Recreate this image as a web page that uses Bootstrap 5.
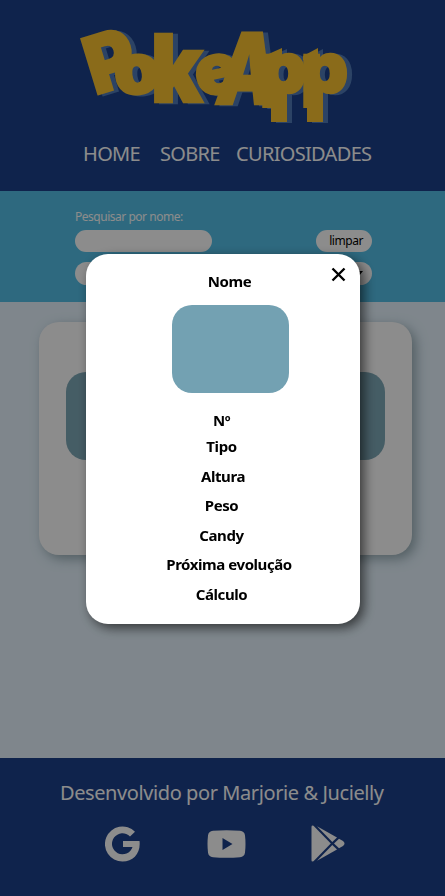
<!DOCTYPE html>
<html lang="pt-br">
<head>
<meta charset="utf-8">
<meta name="viewport" content="width=device-width, initial-scale=1">
<title>PokeApp</title>
<link href="https://cdn.jsdelivr.net/npm/bootstrap@5.3.0/dist/css/bootstrap.min.css" rel="stylesheet">
<style>
body{font-family:"Noto Sans","Open Sans",sans-serif;background:#e7f5ff;height:896px;overflow:hidden}
.top-bar{background:#1d418a;height:191px}
.logo{width:280px;height:98px;margin-top:29px;margin-left:73px}
.logo text{font-family:Inter,sans-serif;font-weight:900;stroke-linejoin:miter}
.menu{font-size:20px;line-height:28px;margin:13px 0 0 83px}
.menu a{color:#fff;text-decoration:none;letter-spacing:-.68px;white-space:nowrap}
.menu a:nth-child(1){width:77px}.menu a:nth-child(2){width:76px}
.filters{background:#54bfe7;height:111px;padding:17px 73px 0 75px}
.filters label{font-size:12px;line-height:18px;color:#fff;letter-spacing:-.48px}
.pill{background:#fff;border:0;border-radius:12px;height:22px;font-size:12px;line-height:22px;color:#000}
.pill-input{width:137px}.pill-btn{width:56px;padding:0 9px;text-align:right;letter-spacing:-.45px}
.pill.second{height:23px}
.second-row{margin-top:10px}
.gallery{height:456px;padding:20px 33px 0 39px}
.poke{background:#fff;border-radius:20px;height:233px;padding:50px 27px 0;box-shadow:4px 4px 12px rgba(70,100,105,.5)}
.thumb{width:117px;height:88px;border-radius:20px;background:#73a1b2}
.poke .thumb{background:#7fa9b8}
.foot{background:#1d418a;height:138px;color:#fff;padding-top:20px}
.foot p{font-size:20px;line-height:30px;letter-spacing:-.41px;margin:0 0 0 60px;white-space:nowrap}
.foot .icons{padding:17px 100px 0 105px}
.shade{position:fixed;inset:0;background:rgba(0,0,0,.45);padding:254px 85px 0 86px}
.sheet{height:370px;background:#fff;border-radius:22px;box-shadow:4px 4px 12px rgba(0,0,0,.6);padding-top:16px;font-size:15px;font-weight:700;color:#000;position:relative}
.sheet .close-x{position:absolute;right:14px;top:13px;line-height:0}
.sheet .thumb{margin:13px 0 16px 86px}
.line{line-height:22px;white-space:nowrap;letter-spacing:-.43px}
.name-line{padding-left:13px}
.stack{padding-right:3px}
.rows{display:grid;row-gap:7.5px;margin-top:4px}
.wide{padding-left:15px}
.height-line{padding-left:3px}
</style>
<script src="https://cdn.jsdelivr.net/npm/bootstrap@5.3.0/dist/js/bootstrap.bundle.min.js"></script>
</head>
<body class="d-flex flex-column">
<header class="top-bar flex-shrink-0 d-flex flex-column">
<svg class="logo flex-shrink-0" viewBox="73 29 280 98" role="img" aria-label="PokeApp">
<defs><g id="word" stroke-width="2.5">
<text transform="translate(95 95) rotate(-17) scale(.95 1)" font-size="79">P</text>
<text transform="translate(114 94) rotate(-8 20 -20) scale(1.05 1)" font-size="70">o</text>
<text transform="translate(151 102) scale(.9 1)" font-size="94">k</text>
<text transform="translate(195 94) rotate(-12 20 -20) scale(1.05 1)" font-size="70">e</text>
<text transform="translate(214 104) skewX(-7) scale(.76 1)" font-size="98">A</text>
<text transform="translate(260 93) scale(1.02 1)" font-size="70">p</text>
<text transform="translate(301 93) scale(1.04 1)" font-size="70">p</text>
<path d="M271 88h16v34h-16zM307 88h16v34h-16zM264 56l18-8v12h-18zM303 56l15-8v12h-15z" stroke="none"/>
</g></defs>
<use href="#word" x="5" y="1" fill="#507ab8" stroke="#507ab8"/>
<use href="#word" fill="#fbc431" stroke="#fbc431"/>
</svg>
<nav class="menu d-flex"><a href="#">HOME</a><a href="#">SOBRE</a><a href="#">CURIOSIDADES</a></nav>
</header>
<section class="filters flex-shrink-0">
<label class="d-block" for="busca">Pesquisar por nome:</label>
<div class="d-flex justify-content-between mt-1"><input id="busca" class="pill pill-input"><button class="pill pill-btn">limpar</button></div>
<div class="second-row d-flex justify-content-between"><span class="pill pill-input second"></span><span class="pill pill-btn second d-flex justify-content-end align-items-center"><svg width="8" height="6" viewBox="0 0 8 6"><path d="M0 0h8L4 5z"/></svg></span></div>
</section>
<main class="gallery flex-shrink-0"><div class="poke d-flex justify-content-between"><div class="thumb"></div><div class="thumb"></div></div></main>
<footer class="foot flex-shrink-0">
<p>Desenvolvido por Marjorie &amp; Jucielly</p>
<div class="icons d-flex align-items-center justify-content-between">
<svg width="36" height="36" viewBox="0 0 36 36"><path d="M30 5.800 25 10.500A10.500 10.500 0 1 0 27.500 21H18v-6h16.500C36 27 28.500 35.500 17.500 35.500A17.500 17.500 0 1 1 30 5.800Z" fill="#fff"/></svg>
<svg width="39" height="28" viewBox="0 0 39 28"><path fill="#fff" fill-rule="evenodd" d="M6 .8Q19.500-.5 33 .8 37.500 1.200 38 5.500 39 14 38 22.500 37.500 26.800 33 27.200 19.500 28.500 6 27.200 1.500 26.800 1 22.500 0 14 1 5.500 1.500 1.200 6 .8ZM15.500 8V20L25.500 14Z"/></svg>
<svg width="34" height="37" viewBox="0 0 34 37"><g fill="#fff"><path d="M1 .5 2.500.8 19.800 18.500 2.500 36.200 1 36.500Q.5 36 .5 35V2Q.5 1 1 .5Z"/><path d="M6 1.200 26 12.500 21.300 17Z"/><path d="M6 35.800 26 24.500 21.300 20Z"/><path d="M28 13.700 32 16Q35 18.500 32 21L28 23.300 23 18.500Z"/></g></svg>
</div>
</footer>
<div class="shade"><div class="sheet" role="dialog">
<span class="close-x"><svg width="15" height="15" viewBox="0 0 15 15"><path d="M1.500 1.500 13.500 13.500M13.500 1.500 1.500 13.500" stroke="#000" stroke-width="2.400"/></svg></span>
<div class="line name-line text-center">Nome</div>
<div class="thumb"></div>
<div class="stack text-center"><div class="line">Nº</div><div class="rows"><div class="line">Tipo</div><div class="line height-line">Altura</div><div class="line">Peso</div><div class="line">Candy</div><div class="line wide">Próxima evolução</div><div class="line">Cálculo</div></div></div>
</div></div>
</body>
</html>
